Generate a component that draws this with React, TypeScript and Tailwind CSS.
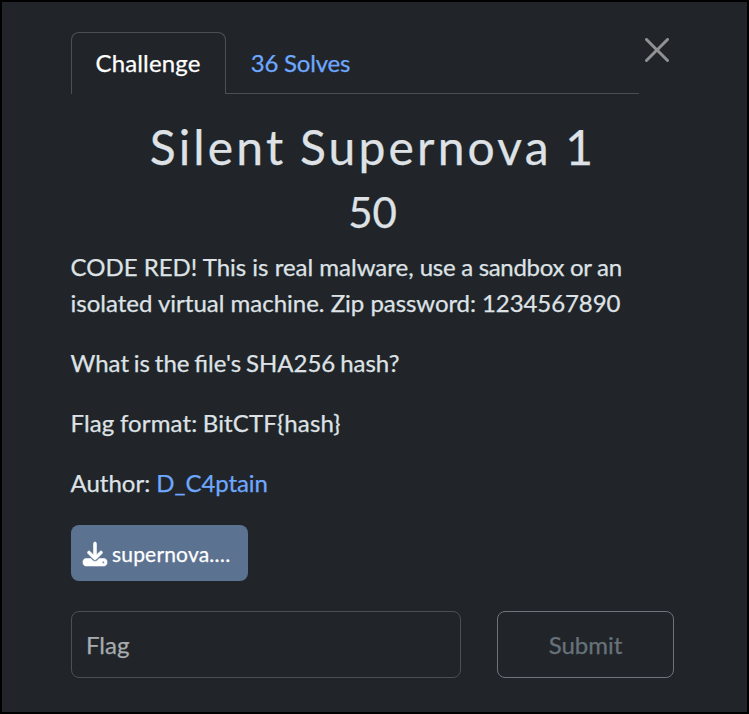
import React from "react";
import { FaDownload } from "react-icons/fa6";

export default function App() {
  return (
    <div className="h-[714px] w-[749px] border-2 border-black bg-[#212529] font-['Lato',sans-serif] text-[24px] leading-[36px] text-[#dee2e6] [-webkit-text-stroke:0.25px_currentColor]">
      <div className="flex items-start pt-[30px] pl-[69px]">
        <nav className="flex h-[62px] w-[568px] border-b border-[#495057]">
          <button className="h-[62px] w-[155px] rounded-t-[8px] border border-b-0 border-[#495057] bg-[#212529] pr-px pb-[2px] tracking-[0.15px] text-white">Challenge</button>
          <button className="h-[62px] w-[149px] pb-px tracking-[-0.2px] text-[#6ea8fe]">36 Solves</button>
        </nav>
        <button aria-label="Close" className="mt-[6px] ml-[6px]">
          <svg width="24" height="24" viewBox="0 0 16 16" fill="#909294">
            <path d="M.293.293a1 1 0 0 1 1.414 0L8 6.586 14.293.293a1 1 0 1 1 1.414 1.414L9.414 8l6.293 6.293a1 1 0 0 1-1.414 1.414L8 9.414l-6.293 6.293a1 1 0 0 1-1.414-1.414L6.586 8 .293 1.707a1 1 0 0 1 0-1.414z" />
          </svg>
        </button>
      </div>
      <main className="ml-[69px] w-[603px]">
        <h2 className="mt-[24px] pl-px text-center text-[48px] leading-[58px] tracking-[3.15px] [word-spacing:-1.8px]">Silent Supernova 1</h2>
        <h3 className="mt-[11px] text-center text-[42px] leading-[50px]">50</h3>
        <p className="mt-[12px] -ml-[0.5px] whitespace-nowrap">
          CODE RED! This is real malware, <span className="tracking-[-0.3px]">use a sandbox or an</span><br />
          isolated virtual machine. Zip <span className="tracking-[-0.08px]">password: 1234567890</span>
        </p>
        <p className="mt-[24px] -ml-[0.5px] [word-spacing:-1.3px]">What is the file's SHA256 hash?</p>
        <p className="mt-[24px] -ml-[0.5px] tracking-[0.13px] [word-spacing:-0.8px]">Flag format: BitCTF&#123;hash&#125;</p>
        <p className="mt-[24px] -ml-[0.5px]">Author: <span className="tracking-[-0.08px] text-[#6ea8fe]">D_C4ptain</span></p>
        <button className="mt-[24px] flex h-[56px] w-[177px] items-center rounded-[8px] bg-[#5b7290] pl-[12px] text-[21px] text-white">
          <FaDownload size={24} className="mt-px overflow-visible stroke-current [stroke-width:12px]" /><span className="ml-[5px] pt-px tracking-[0.18px]">supernova.…</span>
        </button>
        <form className="mt-[30px] flex gap-[36px]">
          <input placeholder="Flag" className="h-[67px] w-[390px] rounded-[8px] border border-[#495057] px-[14px] placeholder:text-[#a7abae]" />
          <button type="button" className="h-[67px] w-[177px] rounded-[8px] border border-[#6c757d] text-[#68727a]">Submit</button>
        </form>
      </main>
    </div>
  );
}
